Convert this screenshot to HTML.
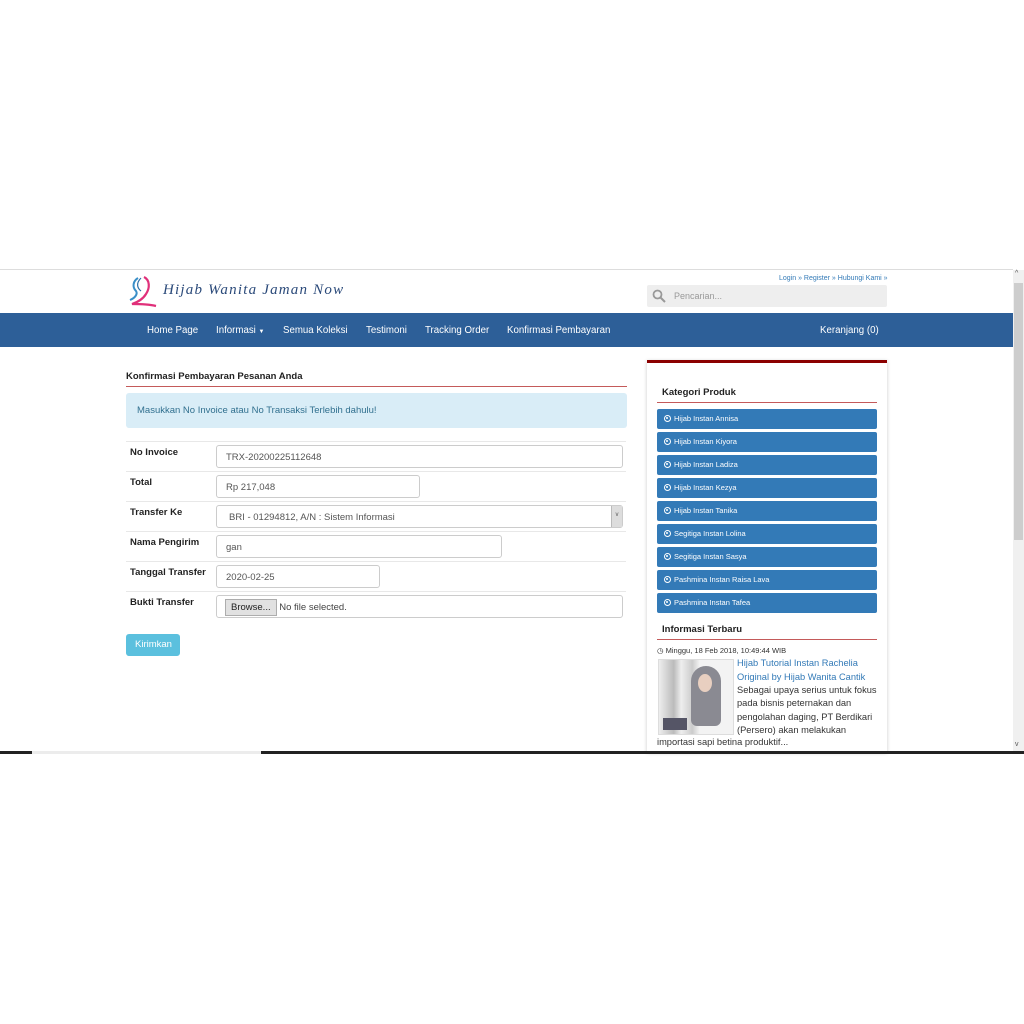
<!DOCTYPE html>
<html><head><meta charset="utf-8"><style>
*{margin:0;padding:0;box-sizing:border-box}
body{width:1024px;height:1024px;background:#fff;position:relative;overflow:hidden;font-family:"Liberation Sans",sans-serif;color:#333}
.a{position:absolute}
.nav span{position:absolute;top:12px;color:#fff;font-size:9.7px}
.lbl{position:absolute;left:130px;font-size:9.5px;font-weight:bold;color:#222}
.inp{position:absolute;left:216px;height:23px;border:1px solid #ccc;border-radius:3px;font-size:9.5px;color:#555;padding:6px 0 0 9px;background:#fff}
.hr{position:absolute;left:126px;width:500px;height:1px;background:#e8e8e8}
.cat{position:absolute;left:657px;width:220px;height:20px;background:#337ab7;border-radius:2px;color:#fff;font-size:7.5px;padding:5px 0 0 7px}
.cat i{display:inline-block;width:7px;height:7px;border:1.5px solid #fff;border-radius:50%;margin-right:3px;vertical-align:-1px;position:relative}
.cat i:after{content:"";position:absolute;left:1px;top:1px;width:2px;height:2px;background:#fff;border-radius:50%}
</style></head><body>
<div class="a" style="left:0;top:269px;width:1013px;height:1px;background:#ddd"></div>
<!-- logo -->
<svg class="a" style="left:128px;top:275px" width="32" height="34" viewBox="0 0 32 34">
<path d="M10 3 C5 6 4 12 8 16 C10 19 7 23 2 25" stroke="#3a8fc8" stroke-width="2" fill="none"/>
<path d="M16 2 C22 5 22 13 18 19 C15 24 10 27 4 29 C12 29 20 29 28 31" stroke="#e0307a" stroke-width="2.2" fill="none"/>
<path d="M13 3 C8 8 9 13 13 16" stroke="#2a6fa8" stroke-width="1.2" fill="none"/>
</svg>
<div class="a" style="left:163px;top:282px;font-family:'Liberation Serif',serif;font-style:italic;font-size:15px;color:#2b4a7a;letter-spacing:1.2px">Hijab Wanita Jaman Now</div>
<div class="a" style="left:779px;top:275px;font-size:7px;color:#337ab7">Login » Register » Hubungi Kami »</div>
<div class="a" style="left:647px;top:285px;width:240px;height:22px;background:#eee;border-radius:2px"></div>
<svg class="a" style="left:652px;top:289px" width="14" height="14" viewBox="0 0 14 14"><circle cx="5.5" cy="5.5" r="4" stroke="#999" stroke-width="1.8" fill="none"/><path d="M8.5 8.5 L13 13" stroke="#999" stroke-width="2"/></svg>
<div class="a" style="left:674px;top:291px;font-size:9px;color:#999">Pencarian...</div>
<!-- nav -->
<div class="a nav" style="left:0;top:313px;width:1013px;height:34px;background:#2d5f98">
<span style="left:147px">Home Page</span>
<span style="left:216px">Informasi <small style="font-size:6px">▼</small></span>
<span style="left:283px">Semua Koleksi</span>
<span style="left:366px">Testimoni</span>
<span style="left:425px">Tracking Order</span>
<span style="left:507px">Konfirmasi Pembayaran</span>
<span style="left:820px">Keranjang (0)</span>
</div>
<!-- scrollbar -->
<div class="a" style="left:1013px;top:270px;width:11px;height:482px;background:#f0f0f0"></div>
<div class="a" style="left:1014px;top:283px;width:9px;height:257px;background:#cdcdcd"></div>
<div class="a" style="left:1015px;top:270px;font-size:7px;color:#555">^</div>
<div class="a" style="left:1015px;top:741px;font-size:7px;color:#555">v</div>
<!-- main -->
<div class="a" style="left:126px;top:371px;font-size:9.5px;font-weight:bold;color:#222">Konfirmasi Pembayaran Pesanan Anda</div>
<div class="a" style="left:126px;top:386px;width:501px;height:1px;background:#c45a5a"></div>
<div class="a" style="left:126px;top:393px;width:501px;height:35px;background:#d9edf7;border-radius:3px;color:#31708f;font-size:9.5px;padding:12px 0 0 11px">Masukkan No Invoice atau No Transaksi Terlebih dahulu!</div>
<div class="hr" style="top:441px"></div><div class="hr" style="top:471px"></div><div class="hr" style="top:501px"></div><div class="hr" style="top:531px"></div><div class="hr" style="top:561px"></div><div class="hr" style="top:591px"></div>
<div class="lbl" style="top:447px">No Invoice</div>
<div class="lbl" style="top:477px">Total</div>
<div class="lbl" style="top:507px">Transfer Ke</div>
<div class="lbl" style="top:537px">Nama Pengirim</div>
<div class="lbl" style="top:567px">Tanggal Transfer</div>
<div class="lbl" style="top:597px">Bukti Transfer</div>
<div class="inp" style="top:445px;width:407px">TRX-20200225112648</div>
<div class="inp" style="top:475px;width:204px">Rp 217,048</div>
<div class="inp" style="top:505px;width:407px;padding-left:12px">BRI - 01294812, A/N : Sistem Informasi<div class="a" style="right:0;top:0;width:11px;height:21px;background:#ddd;border-left:1px solid #bbb;font-size:6px;text-align:center;padding-top:6px">v</div></div>
<div class="inp" style="top:535px;width:286px">gan</div>
<div class="inp" style="top:565px;width:164px">2020-02-25</div>
<div class="inp" style="top:595px;width:407px;padding:3px 0 0 8px"><span style="display:inline-block;background:#e1e1e1;border:1px solid #adadad;padding:2px 5px;color:#222">Browse...</span> <span style="color:#444">No file selected.</span></div>
<div class="a" style="left:126px;top:634px;width:54px;height:22px;background:#5bc0de;border-radius:3px;color:#fff;font-size:9.5px;padding:5px 0 0 9px">Kirimkan</div>
<!-- sidebar -->
<div class="a" style="left:647px;top:360px;width:240px;height:392px;background:#fff;box-shadow:0 1px 4px rgba(0,0,0,.2);border-top:3px solid #8b0000"></div>
<div class="a" style="left:662px;top:387px;font-size:9.5px;font-weight:bold;color:#222">Kategori Produk</div>
<div class="a" style="left:657px;top:402px;width:220px;height:1px;background:#c45a5a"></div>
<div class="cat" style="top:409px"><i></i>Hijab Instan Annisa</div>
<div class="cat" style="top:432px"><i></i>Hijab Instan Kiyora</div>
<div class="cat" style="top:455px"><i></i>Hijab Instan Ladiza</div>
<div class="cat" style="top:478px"><i></i>Hijab Instan Kezya</div>
<div class="cat" style="top:501px"><i></i>Hijab Instan Tanika</div>
<div class="cat" style="top:524px"><i></i>Segitiga Instan Lolina</div>
<div class="cat" style="top:547px"><i></i>Segitiga Instan Sasya</div>
<div class="cat" style="top:570px"><i></i>Pashmina Instan Raisa Lava</div>
<div class="cat" style="top:593px"><i></i>Pashmina Instan Tafea</div>
<div class="a" style="left:662px;top:624px;font-size:9.5px;font-weight:bold;color:#222">Informasi Terbaru</div>
<div class="a" style="left:657px;top:639px;width:220px;height:1px;background:#c45a5a"></div>
<div class="a" style="left:657px;top:646px;font-size:7.5px;color:#333">◷ Minggu, 18 Feb 2018, 10:49:44 WIB</div>
<div class="a" style="left:658px;top:659px;width:76px;height:76px;border:1px solid #ddd;background:linear-gradient(90deg,#eee 0,#bbb 20%,#eee 30%,#ccc 45%,#f3f3f3 55%);overflow:hidden">
<div class="a" style="left:32px;top:6px;width:30px;height:60px;background:#8a8a92;border-radius:15px 15px 6px 6px"></div>
<div class="a" style="left:39px;top:14px;width:14px;height:18px;background:#e8cfc0;border-radius:50%"></div>
<div class="a" style="left:4px;top:58px;width:24px;height:12px;background:#556"></div>
</div>
<div class="a" style="left:737px;top:657px;width:140px;font-size:9.3px;line-height:13.5px;color:#337ab7">Hijab Tutorial Instan Rachelia Original by Hijab Wanita Cantik</div>
<div class="a" style="left:737px;top:684px;width:142px;font-size:9.3px;line-height:13.3px;color:#333">Sebagai upaya serius untuk fokus pada bisnis peternakan dan pengolahan daging, PT Berdikari (Persero) akan melakukan</div>
<div class="a" style="left:657px;top:737px;font-size:9.3px;color:#333">importasi sapi betina produktif...</div>
<!-- bottom line -->
<div class="a" style="left:0;top:751px;width:1024px;height:3px;background:#222"></div>
<div class="a" style="left:32px;top:751px;width:229px;height:3px;background:#ececec"></div>
</body></html>
